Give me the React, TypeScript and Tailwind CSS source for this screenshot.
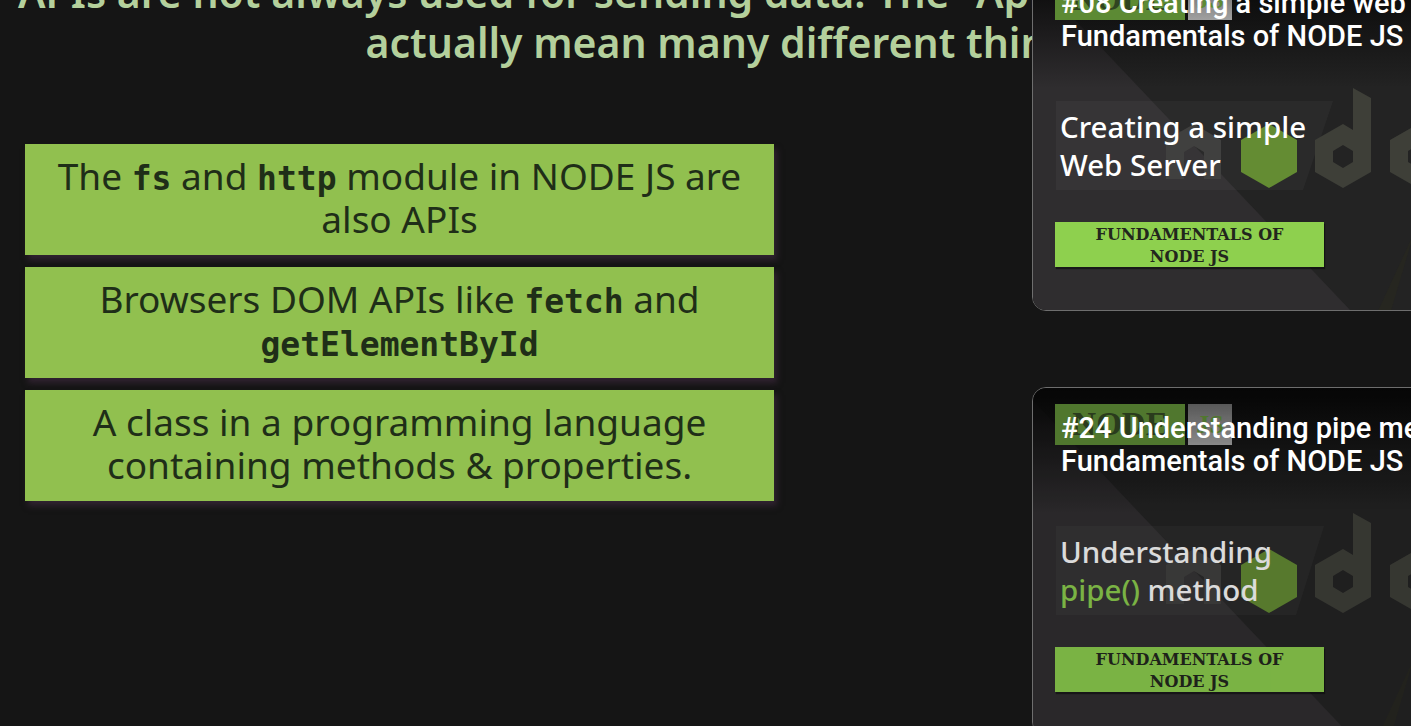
const codeCls = "font-['DejaVu_Sans_Mono'] font-bold text-[33px] leading-none"

const slideBoxes = [
  <>The <code className={codeCls}>fs</code> and <code className={codeCls}>http</code> module in NODE JS are<br />also APIs</>,
  <>Browsers DOM APIs like <code className={codeCls}>fetch</code> and<br /><code className={codeCls}>getElementById</code></>,
  <>A class in a programming language<br />containing methods &amp; properties.</>,
]

type ThumbProps = {
  title: string
  line1: React.ReactNode
  line2: React.ReactNode
  panel: string
  dim: string
}

function Thumbnail({ title, line1, line2, panel, dim }: ThumbProps) {
  return (
    <div className="relative w-[620px] h-[349px] shrink-0 overflow-hidden rounded-[14px] border border-[#6e6e6e] bg-[#0e0e0e]">
      <div className={`relative h-full bg-[#232323] ${dim}`}>
        {/* background art */}
        <svg className="absolute inset-0" width="620" height="348" viewBox="0 0 620 348" fill="none">
          <defs>
            <linearGradient id="fade" x1="0" y1="0" x2="0" y2="1">
              <stop offset="0" stopColor="#050505" />
              <stop offset="0.36" stopColor="#050505" stopOpacity="0" />
            </linearGradient>
          </defs>
          <polygon points="-12,0 318,348 0,348" fill="#2f2d2f" />
          <path fillRule="evenodd" d="M161 161L188 177V216H171V189L161 183L151 189V216H133V177Z" fill="#3a3a38" />
          <polygon points={panel} fill="#ffffff" fillOpacity="0.035" />
          <polygon points="236,161 264,177 264,209 236,225 208,209 208,177" fill="#648c33" />
          <path fillRule="evenodd" d="M320 125L338 135V209L310 225L282 209V177L310 161L320 167ZM310 182L320 188V199L310 205L300 199V188Z" fill="#3e3f38" />
          <path fillRule="evenodd" d="M385 161L413 177V209L385 225L357 209V177ZM385 182L395 188V199L385 205L375 199V188Z" fill="#3e3f38" />
          <polygon points="345,348 381,270 358,348" fill="#262620" />
          <rect width="620" height="348" fill="url(#fade)" />
        </svg>

        <div className="relative flex flex-col items-start pl-[22px] pt-[16px]">
          <div className="flex gap-[3px] font-['Liberation_Serif'] font-bold leading-[41px]">
            <div className="w-[130px] h-[41px] bg-[#5c8a34] text-center text-[33px] text-[#2f4420]">NODE</div>
            <div className="w-[44px] h-[41px] bg-gradient-to-b from-[#666] to-[#a0a0a0] text-center text-[26px] text-[#5c8a34]">JS</div>
          </div>
          <div className="mt-[88px] ml-[5px] font-['Noto_Sans'] font-medium text-[29.5px] leading-[38px] text-white">
            <div>{line1}</div>
            <div>{line2}</div>
          </div>
          <div className="mt-[38px] w-[269px] h-[45px] pt-[2px] bg-[#8ed04e] shadow-[1px_2px_1px_rgba(0,0,0,0.45)] text-center font-['DejaVu_Serif'] font-bold text-[16px] leading-[22px] text-[#22261d]">
            FUNDAMENTALS OF<br />NODE JS
          </div>
        </div>
      </div>

      {/* video title sits on top of the picture */}
      <div className="absolute left-[28px] top-[24px] whitespace-nowrap font-['Roboto'] font-medium text-[29px] leading-[33px] text-white">
        {title}<br />Fundamentals of NODE JS
      </div>
    </div>
  )
}

export default function App() {
  return (
    <div className="flex w-[1411px] h-[726px] overflow-hidden bg-[#151515]">
      {/* video slide */}
      <main className="w-[1032px] shrink-0 overflow-hidden">
        <div className="w-[1458px] -mt-[33px] text-center whitespace-nowrap font-['Noto_Sans'] font-semibold text-[41px] leading-[50px] text-[#b4d09c]">
          APIs are not always used for sending data. The "Api" word can also be a<br />actually mean many different things
        </div>
        <div className="mt-[77px] ml-[25px] w-[749px] flex flex-col gap-[12px]">
          {slideBoxes.map((box, i) => (
            <div key={i} className="h-[111px] pb-[5px] flex items-center justify-center text-center bg-[#91c04f] shadow-[3px_5px_6px_rgba(60,40,60,0.7)] font-['Noto_Sans'] text-[37px] leading-[43px] text-[#1f2e18]">
              <p>{box}</p>
            </div>
          ))}
        </div>
      </main>

      {/* suggested videos */}
      <aside className="flex flex-col gap-[76px] -mt-[38px]">
        <Thumbnail
          title="#08 Creating a simple web server"
          line1="Creating a simple"
          line2="Web Server"
          panel="23,138 300,138 270,227 23,227"
          dim=""
        />
        <Thumbnail
          title="#24 Understanding pipe method"
          line1="Understanding"
          line2={<><span className="text-[#8ed04e]">pipe()</span> method</>}
          panel="23,138 291,138 263,227 23,227"
          dim="opacity-85"
        />
      </aside>
    </div>
  )
}
